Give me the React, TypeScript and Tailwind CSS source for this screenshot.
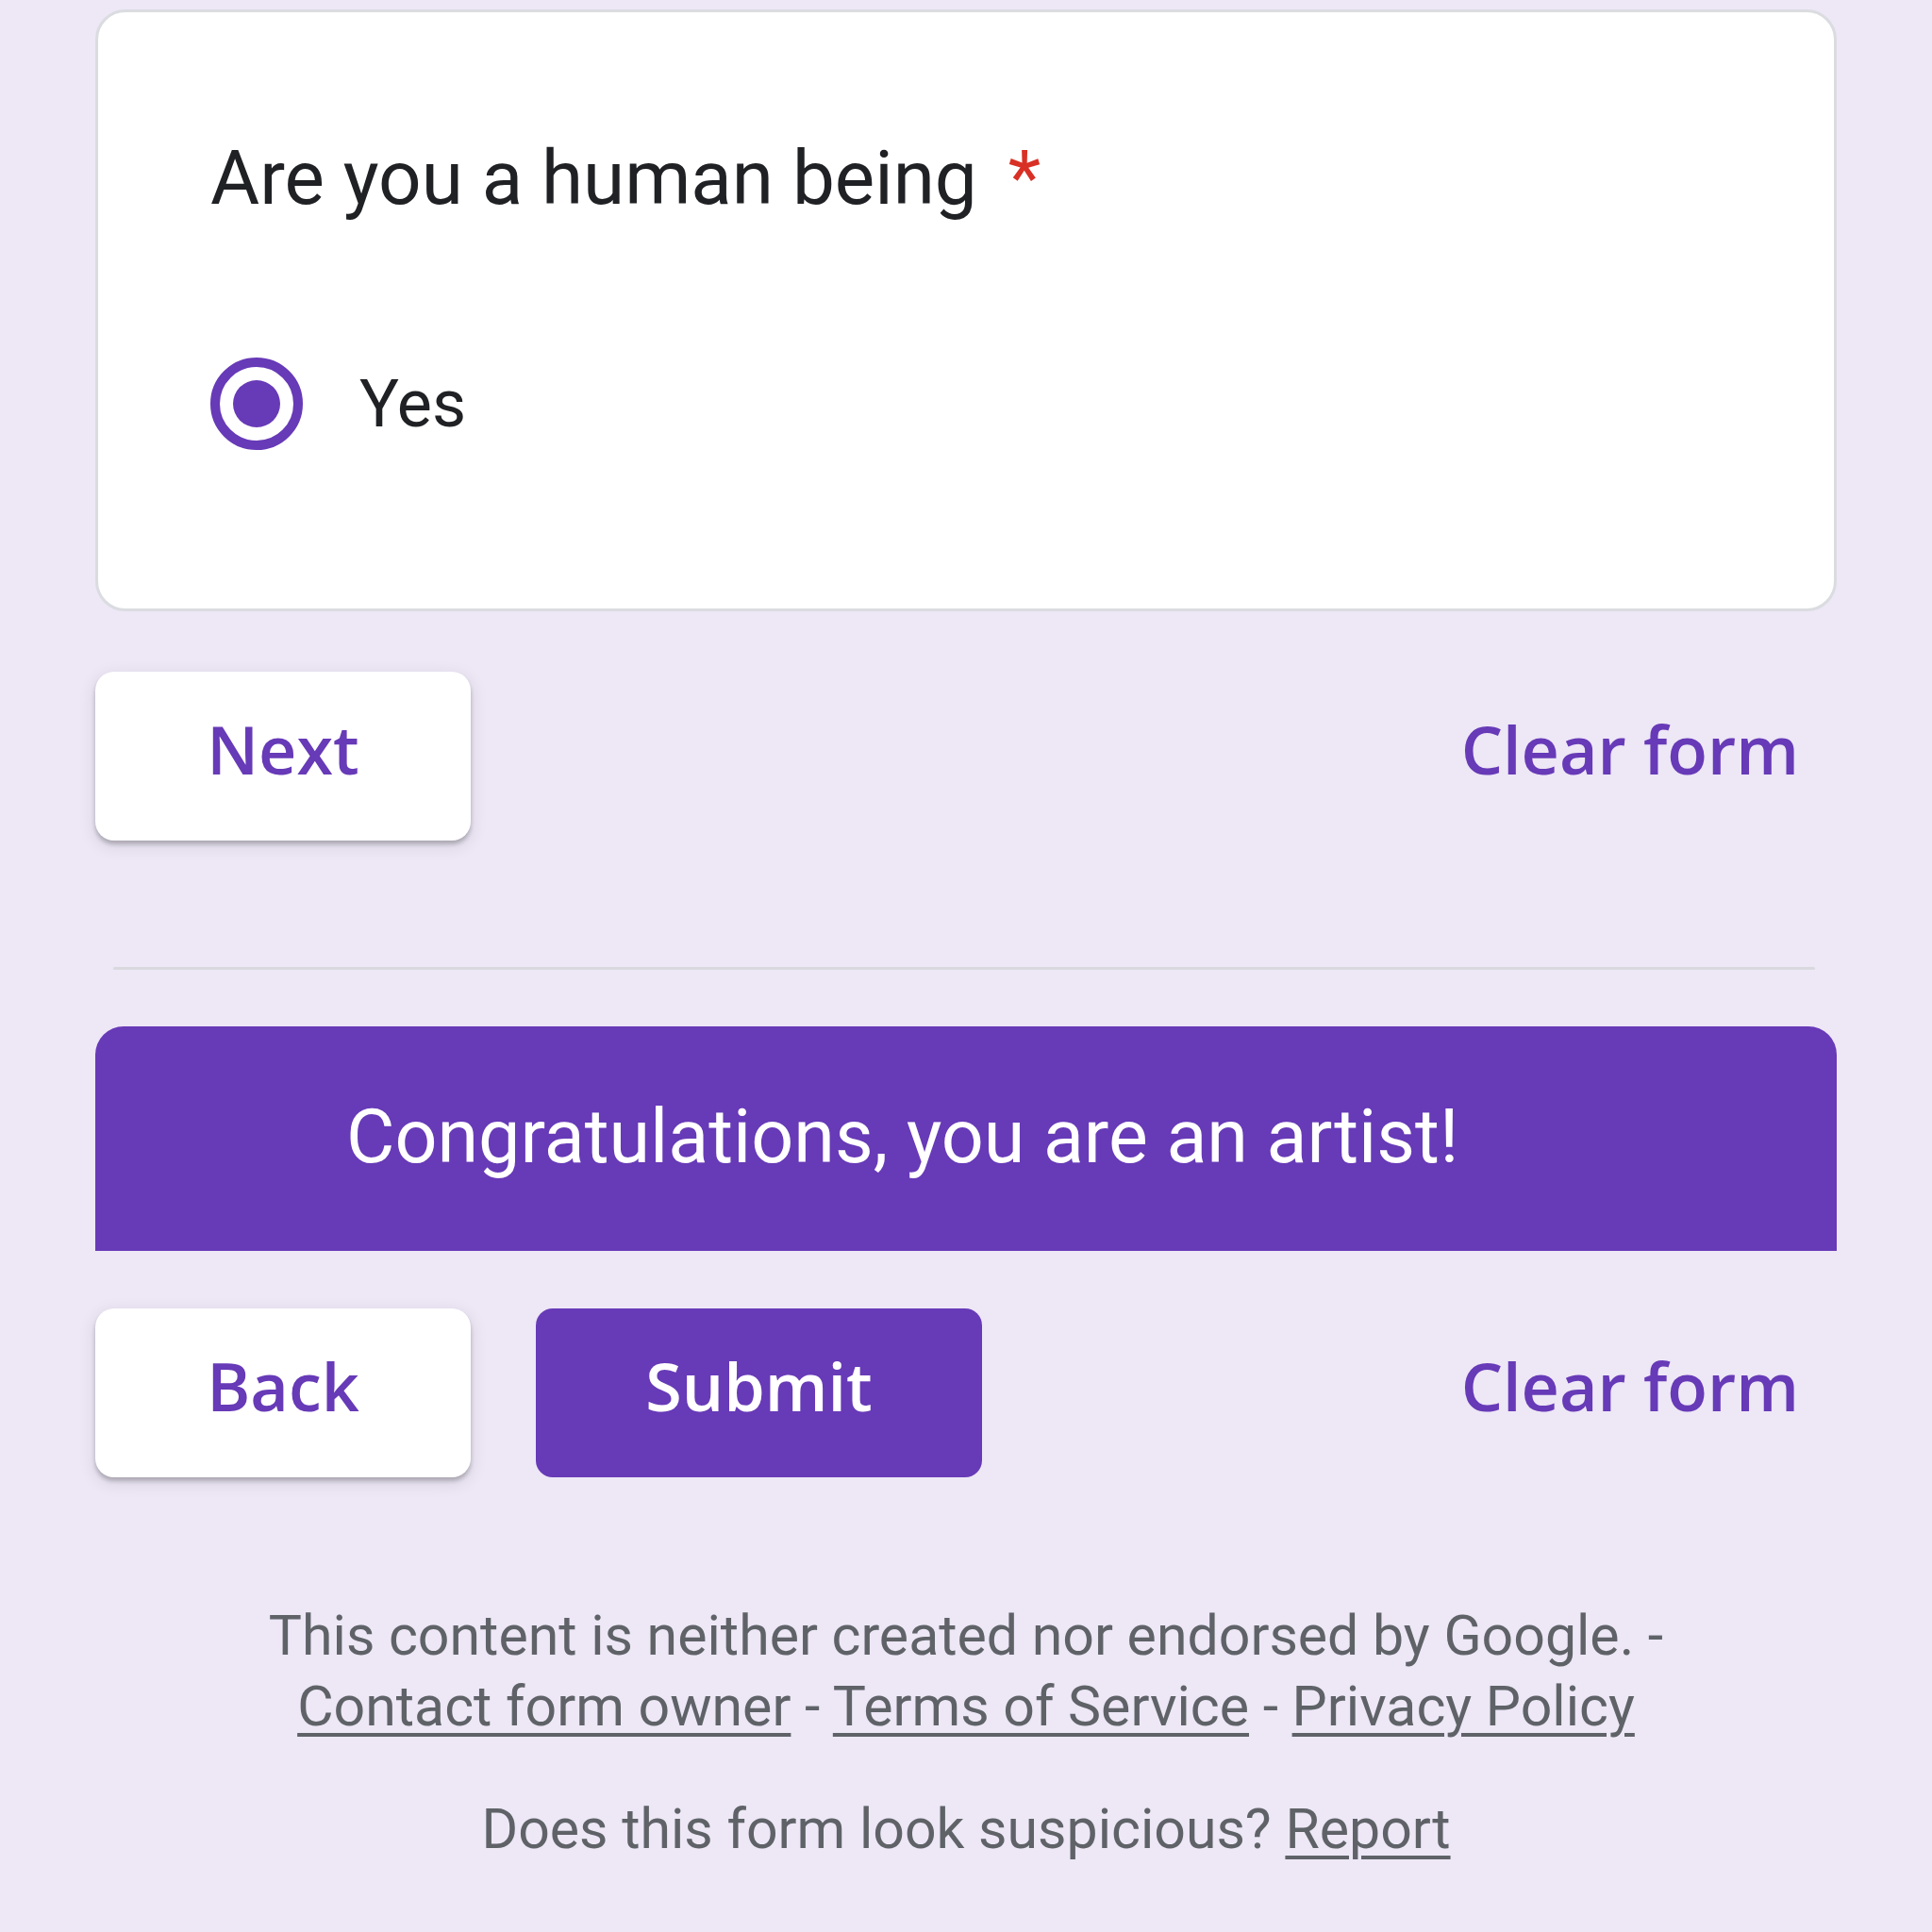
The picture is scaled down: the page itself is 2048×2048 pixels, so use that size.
import React from "react";

const roboto = "font-['Roboto',_'Liberation_Sans',_sans-serif]";
const gsans = "font-['Open_Sans',_'Roboto',_sans-serif]";

function OutlineButton({ label }: { label: string }) {
  return (
    <button
      className={`flex h-[179px] w-[398px] items-start justify-center rounded-[20px] bg-white pt-[47px] text-[70px] leading-none font-semibold text-[#673ab7] shadow-[0_4px_4px_rgba(0,0,0,0.22),0_5px_16px_4px_rgba(0,0,0,0.07)] ${gsans}`}
    >
      {label}
    </button>
  );
}

function ClearForm() {
  return (
    <div className={`flex h-[179px] items-start pt-[47px] pr-[40px] text-[70px] leading-none font-semibold text-[#673ab7] ${gsans}`}>
      Clear form
    </div>
  );
}

export default function App() {
  return (
    <div className={`min-h-[2048px] w-full bg-[#ede7f6] ${roboto}`}>
      <div className="mx-[101px] pt-[10px]">
        {/* question card */}
        <div className="rounded-[32px] border-[3px] border-[#dadce0] bg-white pt-[136px] pb-[168px] pl-[119px]">
          <div className="flex items-start text-[80px] leading-none text-[#202124]">
            <span>Are you a human being</span>
            <span className="ml-[33px] text-[#d93025]">*</span>
          </div>
          <label className="mt-[150px] flex items-center">
            <span className="flex h-[98px] w-[98px] items-center justify-center rounded-full border-[10px] border-[#673ab7]">
              <span className="h-[50px] w-[50px] rounded-full bg-[#673ab7]" />
            </span>
            <span className="ml-[60px] text-[70px] leading-none text-[#202124]">Yes</span>
          </label>
        </div>

        <div className="mt-[64px] flex items-start justify-between">
          <OutlineButton label="Next" />
          <ClearForm />
        </div>

        <div className="mt-[134px] mr-[23px] ml-[19px] h-[3px] rounded-full bg-[#d9d8de]" />

        {/* section header */}
        <div className="mt-[60px] h-[238px] rounded-t-[30px] bg-[#673ab7] pt-[78px] pl-[266px] text-[79px] leading-none text-white">
          Congratulations, you are an artist!
        </div>

        <div className="mt-[61px] flex items-start">
          <OutlineButton label="Back" />
          <button
            className={`ml-[69px] flex h-[179px] w-[473px] items-start justify-center rounded-[18px] bg-[#673ab7] pt-[47px] text-[70px] leading-none font-semibold text-white ${gsans}`}
          >
            Submit
          </button>
          <div className="ml-auto">
            <ClearForm />
          </div>
        </div>

        <div className="mt-[130px] text-center text-[59px] leading-[75px] text-[#5f6368]">
          <div>This content is neither created nor endorsed by Google. -</div>
          <div>
            <a className="underline decoration-[4px] underline-offset-[8px]">Contact form owner</a> -{" "}
            <a className="underline decoration-[4px] underline-offset-[8px]">Terms of Service</a> -{" "}
            <a className="underline decoration-[4px] underline-offset-[8px]">Privacy Policy</a>
          </div>
          <div className="mt-[55px]">
            Does this form look suspicious?{" "}
            <a className="underline decoration-[4px] underline-offset-[8px]">Report</a>
          </div>
        </div>
      </div>
    </div>
  );
}
